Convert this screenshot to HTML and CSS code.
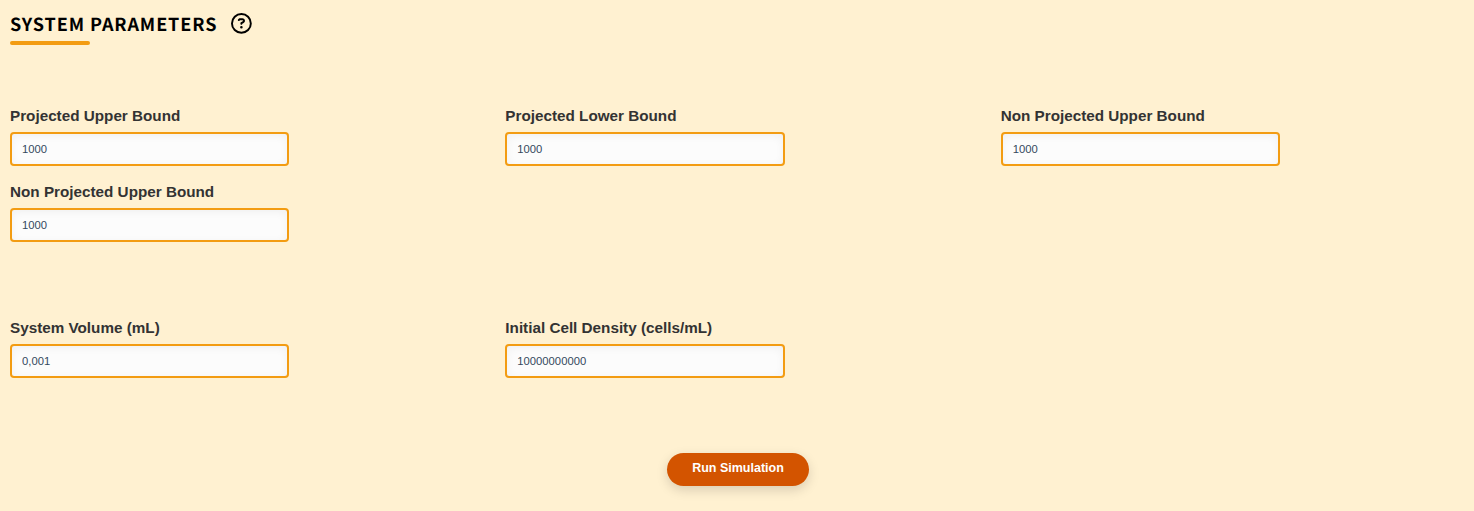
FILE: index.html
```html
<!DOCTYPE html>
<html lang="en">
<head>
<meta charset="utf-8">
<title>System Parameters</title>
<link rel="stylesheet" href="styles.css">
</head>
<body>
<main class="panel">
  <header class="heading">
    <h2 class="title">SYSTEM PARAMETERS</h2>
    <svg class="help" viewBox="0 0 512 512" fill="currentColor" role="img" aria-label="Help"><path d="M464 256A208 208 0 1 0 48 256a208 208 0 1 0 416 0zM0 256a256 256 0 1 1 512 0A256 256 0 1 1 0 256zm169.800-90.700c7.900-22.300 29.100-37.300 52.800-37.300h58.300c34.900 0 63.100 28.300 63.100 63.100c0 22.600-12.100 43.500-31.700 54.800L280 264.400c-.2 13-10.900 23.600-24 23.600c-13.300 0-24-10.700-24-24V250.500c0-8.600 4.600-16.500 12.100-20.800l44.300-25.400c4.700-2.700 7.600-7.700 7.600-13.100c0-8.400-6.800-15.100-15.100-15.100H222.600c-3.400 0-6.400 2.100-7.500 5.300l-.4 1.200c-4.400 12.500-18.200 19-30.600 14.600s-19-18.200-14.600-30.600l.3-1.300zM224 352a32 32 0 1 1 64 0 32 32 0 1 1-64 0z"/></svg>
  </header>
  <section class="fields bounds">
    <div class="field"><label class="label" for="pu">Projected Upper Bound</label><input class="input" id="pu" value="1000"></div>
    <div class="field"><label class="label" for="pl">Projected Lower Bound</label><input class="input" id="pl" value="1000"></div>
    <div class="field"><label class="label" for="nu">Non Projected Upper Bound</label><input class="input" id="nu" value="1000"></div>
    <div class="field"><label class="label" for="nl">Non Projected Upper Bound</label><input class="input" id="nl" value="1000"></div>
  </section>
  <section class="fields system">
    <div class="field"><label class="label" for="vol">System Volume (mL)</label><input class="input" id="vol" value="0,001"></div>
    <div class="field"><label class="label" for="den">Initial Cell Density (cells/mL)</label><input class="input" id="den" value="10000000000"></div>
  </section>
  <div class="actions"><button class="run" type="button">Run Simulation</button></div>
</main>
</body>
</html>
```
FILE: styles.css
```css
* { box-sizing: border-box; }
body {
  margin: 0;
  height: 511px;
  overflow: hidden;
  background: #fff1d1;
  font-family: "Liberation Sans", Arial, sans-serif;
}
.panel { padding: 9px 10px 0; }
.heading {
  display: flex;
  align-items: center;
  gap: 13.700px;
  height: 29px;
  color: #000;
}
.title {
  position: relative;
  margin: 0;
  padding-top: 2px;
  font: 700 18px/29px "Noto Sans CJK JP", sans-serif;
  letter-spacing: 0.920px;
  text-rendering: geometricPrecision;
}
.title::after {
  content: "";
  position: absolute;
  left: 0;
  bottom: -6px;
  width: 80px;
  height: 4px;
  border-radius: 2px;
  background: #f39c12;
}
.help { width: 20.800px; height: 20.800px; }
.fields {
  display: grid;
  grid-template-columns: repeat(3, 1fr);
  gap: 17px 32px;
}
.bounds { margin-top: 69px; }
.system { margin-top: 77px; }
.field {
  display: flex;
  flex-direction: column;
  align-items: flex-start;
  gap: 7px;
}
.label {
  color: #333;
  font-size: 15.250px;
  font-weight: 700;
  line-height: 18px;
}
.input {
  width: 279.330px;
  height: 34px;
  padding: 0 10px;
  border: 2px solid #f39c12;
  border-radius: 4px;
  background: #fcfcfc;
  box-shadow: inset 0 2px 8px rgba(0, 0, 0, 0.05);
  color: #34495e;
  font: 11.250px "Liberation Sans", Arial, sans-serif;
}
.actions {
  display: flex;
  justify-content: center;
  margin-top: 75px;
  padding-left: 2px;
}
.run {
  width: 142px;
  height: 33px;
  padding: 0 0 4px;
  border: 0;
  border-radius: 17px;
  background: #d35400;
  box-shadow: 0 4px 12px rgba(0, 0, 0, 0.15);
  color: #fff;
  font: 700 12.500px "Liberation Sans", Arial, sans-serif;
}
```
